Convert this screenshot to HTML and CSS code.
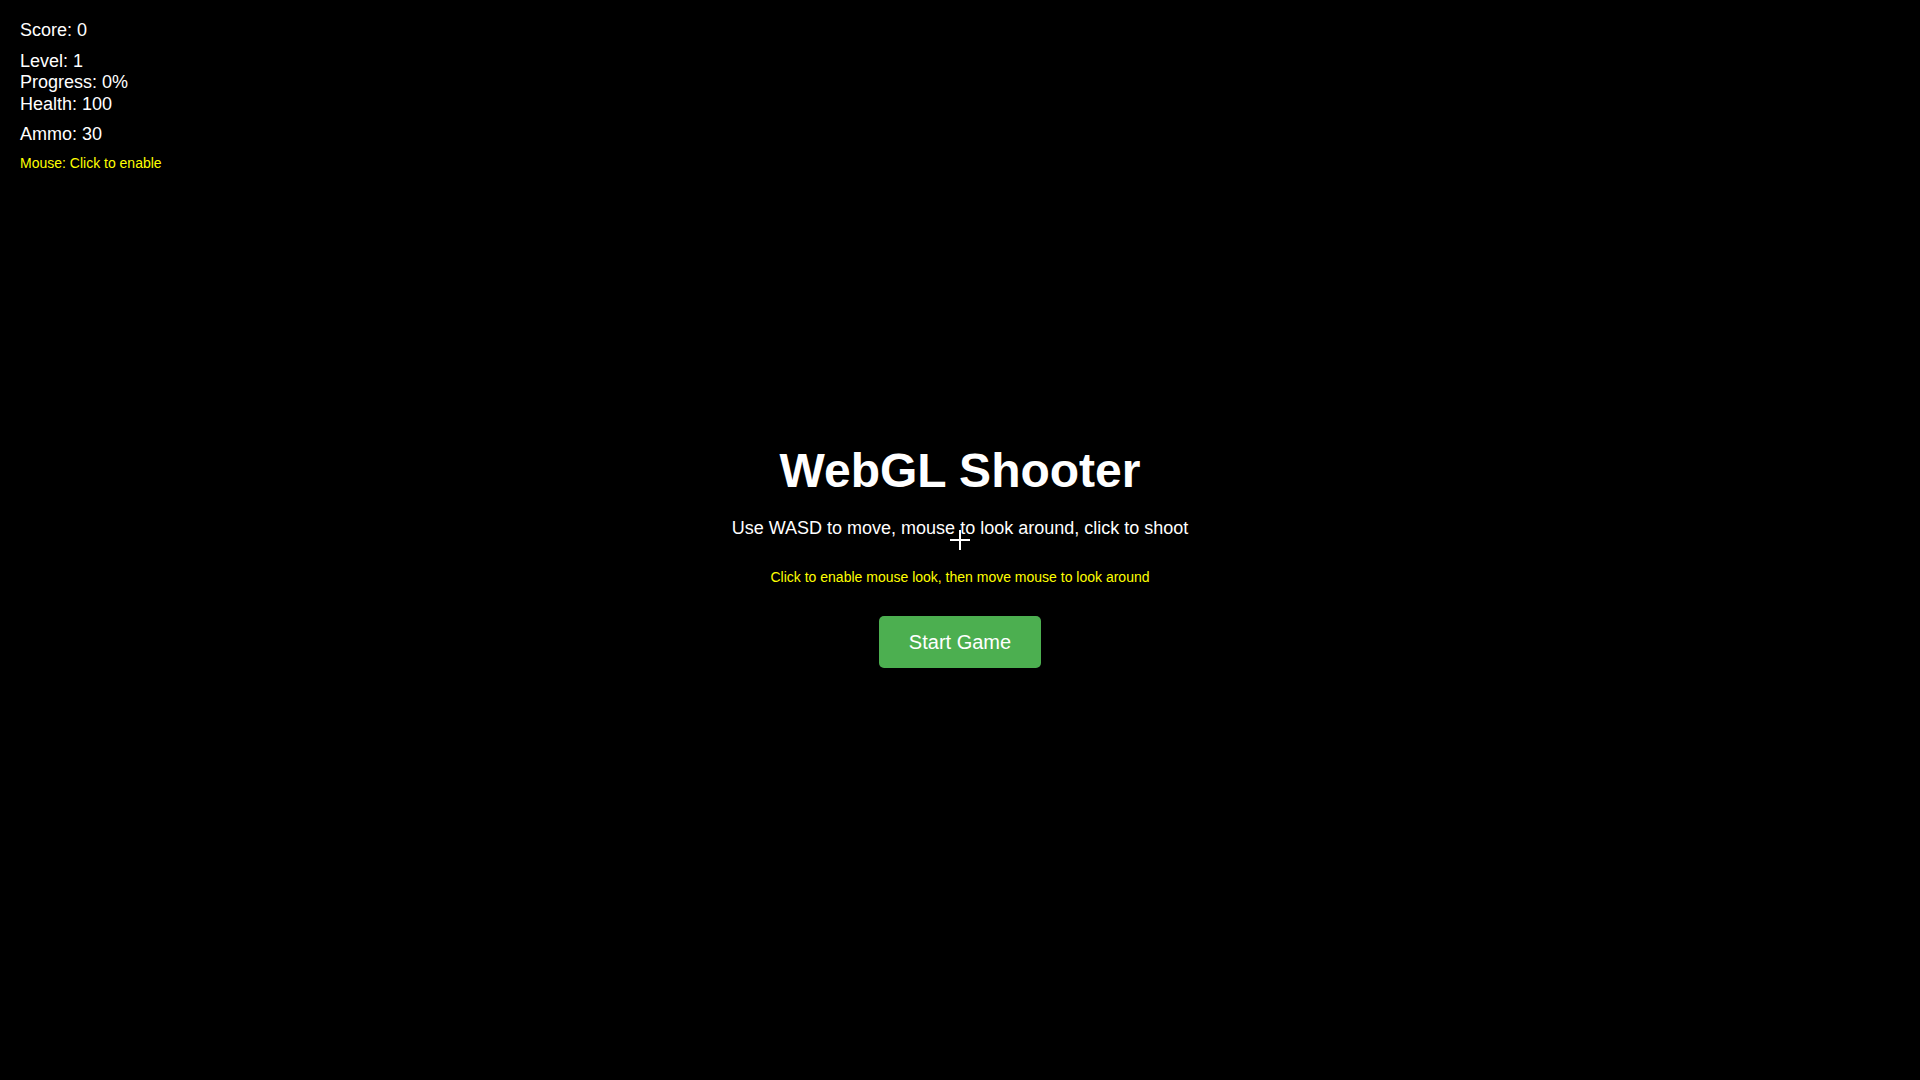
FILE: index.html
```html
<!DOCTYPE html>
<html lang="en">
<head>
<meta charset="utf-8">
<title>WebGL Shooter</title>
<link rel="stylesheet" href="styles.css">
</head>
<body>
<div class="hud">
  <div class="hud-group">Score: 0</div>
  <div class="hud-group hud-stats">Level: 1<br>Progress: 0%<br>Health: 100</div>
  <div class="hud-group hud-last">Ammo: 30</div>
  <div class="hud-mouse">Mouse: Click to enable</div>
</div>

<main class="menu">
  <div class="menu-inner">
    <h1 class="menu-title">WebGL Shooter</h1>
    <p class="menu-text">Use WASD to move, mouse to look around, click to shoot</p>
    <p class="menu-hint">Click to enable mouse look, then move mouse to look around</p>
    <button class="start-btn" type="button">Start Game</button>
  </div>
</main>

<div class="crosshair" aria-hidden="true"></div>
</body>
</html>
```

FILE: styles.css
```css
html, body {
  margin: 0;
  padding: 0;
  height: 100%;
  background: #000;
  overflow: hidden;
}

body {
  font-family: "Liberation Sans", Arial, Helvetica, sans-serif;
  color: #fff;
}

.hud {
  position: absolute;
  top: 20px;
  left: 20px;
  font-size: 18px;
  line-height: 21.2px;
  z-index: 2;
}

.hud-group {
  margin-bottom: 10px;
}

.hud-stats {
  margin-bottom: 9px;
}

.hud-last {
  margin-bottom: 10px;
}

.hud-mouse {
  color: #ffff00;
  font-size: 14px;
  line-height: 16.1px;
}

.menu {
  height: 100%;
  display: flex;
  align-items: center;
  justify-content: center;
}

.menu-inner {
  display: flex;
  flex-direction: column;
  align-items: center;
  padding-top: 30px;
  text-align: center;
}

.menu-title {
  margin: 0 0 20px;
  font-size: 48px;
  font-weight: bold;
  line-height: 55.2px;
}

.menu-text {
  margin: 0 0 31px;
  font-size: 18px;
  line-height: 20.7px;
}

.menu-hint {
  margin: 0 0 30px;
  font-size: 14px;
  line-height: 16.1px;
  color: #ffff00;
}

.start-btn {
  font-family: inherit;
  font-size: 20px;
  line-height: 22px;
  padding: 15px 30px;
  color: #fff;
  background: #4caf50;
  border: none;
  border-radius: 5px;
  cursor: pointer;
}

.crosshair {
  position: absolute;
  left: 950px;
  top: 530px;
  width: 20px;
  height: 20px;
  z-index: 3;
  pointer-events: none;
}

.crosshair::before,
.crosshair::after {
  content: "";
  position: absolute;
  background: #fff;
}

.crosshair::before {
  left: 0;
  top: 9px;
  width: 20px;
  height: 2px;
}

.crosshair::after {
  left: 9px;
  top: 0;
  width: 2px;
  height: 20px;
}
```
